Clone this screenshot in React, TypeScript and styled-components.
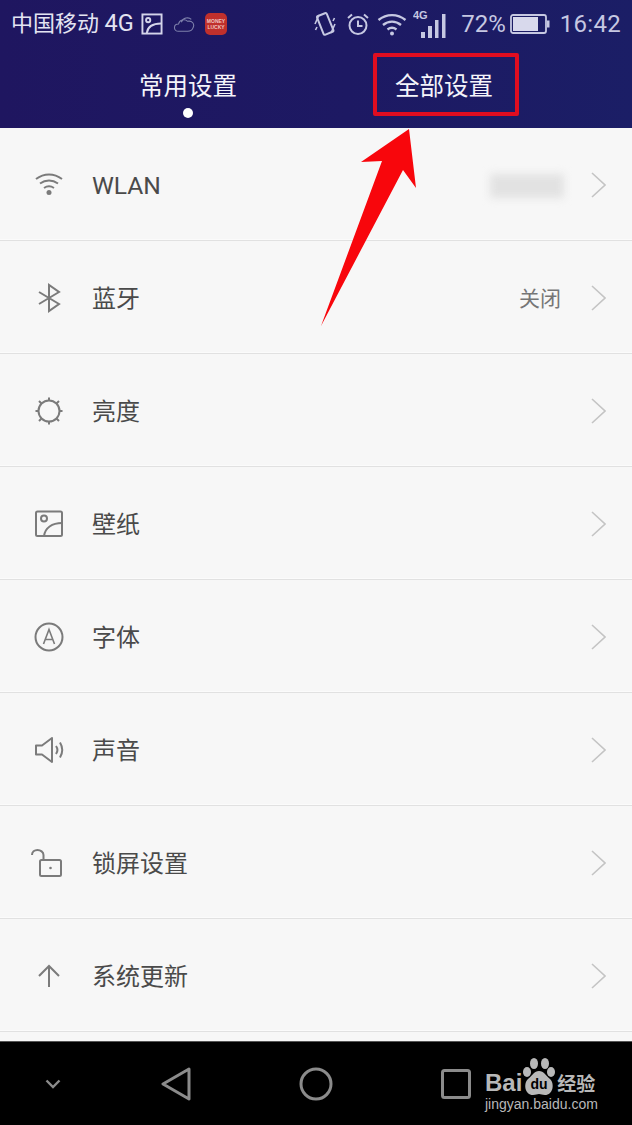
import React from 'react'
import styled, { createGlobalStyle } from 'styled-components'

const GlobalStyle = createGlobalStyle`
html, body {
  margin: 0;
  padding: 0;
  background: #000;
}
`

const fontStack = `Roboto, "Noto Sans CJK SC", "Noto Sans", sans-serif`

const Screen = styled.div`
position: relative;
width: 632px;
height: 1125px;
overflow: hidden;
display: flex;
flex-direction: column;
font-family: ${fontStack};
background: #f7f7f7;
`

const Header = styled.header`
height: 128px;
flex: none;
display: flex;
flex-direction: column;
background: linear-gradient(90deg, #1f1660 0%, #1d1963 55%, #1b1e66 100%);
`

const StatusBar = styled.div`
height: 47px;
flex: none;
display: flex;
align-items: center;
justify-content: space-between;
padding: 0 11px 0 12px;
color: #c6c8e2;
`

const StatusGroup = styled.div`
display: flex;
align-items: center;
`

const Carrier = styled.span`
font-size: 22px;
line-height: 30px;
color: #e4e4f2;
margin: 0 7px 0 -1px;
white-space: nowrap;
`

const CarrierNet = styled.span`
font-size: 23.5px;
`

const Clock = styled.span`
font-size: 24px;
margin-left: 10px;
letter-spacing: 0.3px;
`

const Percent = styled.span`
font-size: 24px;
margin: 0 4px 0 12px;
`

const Tabs = styled.nav`
flex: 1;
display: grid;
grid-template-columns: 376px 1fr;
`

const FirstTab = styled.div`
display: flex;
flex-direction: column;
align-items: center;
width: 100px;
margin-left: 138px;
padding-top: 20px;
`

const TabLabel = styled.span`
font-size: 24.5px;
line-height: 40px;
color: #f4f4fa;
white-space: nowrap;
`

const Dot = styled.span`
width: 10px;
height: 10px;
margin-top: 1px;
border-radius: 50%;
background: #fff;
`

const Highlight = styled.div`
box-sizing: border-box;
width: 146px;
height: 63px;
margin: 6px 0 0 -3px;
padding: 4px 4px 0 0;
border: 4px solid #e00d20;
border-radius: 2px;
display: flex;
align-items: center;
justify-content: center;
`

const List = styled.ul`
flex: 1;
margin: 0;
padding: 0;
list-style: none;
`

const Row = styled.li`
box-sizing: border-box;
height: 113px;
display: flex;
align-items: center;
padding: 0 26px 0 31px;
border-bottom: 1px solid #e1e1e1;
box-shadow: inset 0 -1px 0 #fbfbfb;
`

const IconSlot = styled.span`
width: 36px;
height: 36px;
flex: none;
display: flex;
margin: 2px 25px 0 0;
color: #7b7b7b;
`

const Label = styled.span<{ $latin?: boolean }>`
flex: 1;
font-size: ${p => (p.$latin ? '24.6px' : '24px')};
color: #4a4a4a;
padding: ${p => (p.$latin ? '2px 0 0' : '0 0 2px')};
`

const Value = styled.span`
font-size: 21px;
color: #767676;
margin-right: 30px;
`

const BlurredValue = styled.span`
width: 74px;
height: 24px;
margin: 4px 27px 0 0;
background: #e2e2e2;
filter: blur(4px);
`

const ChevronIcon = styled.svg`
flex: none;
margin-top: 2px;
`

const NavBar = styled.footer`
height: 84px;
flex: none;
display: grid;
grid-template-columns: 106px 140px 140px 140px;
align-items: center;
justify-items: center;
background: #000;
border-top: 1px solid #555;
box-sizing: border-box;
color: #8b8b8b;
`

const Watermark = styled.div`
position: absolute;
left: 485px;
top: 1057px;
width: 114px;
color: #b8b8b8;
`

const LogoLine = styled.div`
display: flex;
align-items: flex-end;
height: 39px;
white-space: nowrap;
`

const LogoLatin = styled.span`
font-family: "Liberation Sans", sans-serif;
font-size: 24px;
font-weight: 700;
line-height: 26px;
`

const LogoCjk = styled.span`
font-family: "Noto Sans CJK SC", sans-serif;
font-size: 19px;
font-weight: 700;
line-height: 26px;
`

const Domain = styled.div`
font-family: "Liberation Sans", sans-serif;
font-size: 14px;
line-height: 16px;
white-space: nowrap;
`

const Arrow = styled.svg`
position: absolute;
left: 316px;
top: 125px;
`

const Line = { fill: 'none', stroke: 'currentColor', strokeWidth: 2 } as const

const WifiIcon = () => (
  <svg width="36" height="36" viewBox="0 0 36 36" {...Line}>
    <path d="M5 12c8-6 18-6 26 0" />
    <path d="M9 16.500c5.500-4 12.500-4 18 0" />
    <path d="M13 21c3-2 7-2 10 0" />
    <circle cx="18" cy="25.500" r="2.500" fill="currentColor" stroke="none" />
  </svg>
)

const BluetoothIcon = () => (
  <svg width="36" height="36" viewBox="0 0 36 36" {...Line}>
    <path d="M8 24l20-12-10-7v26l10-7L8 12" />
  </svg>
)

const SunIcon = () => (
  <svg width="36" height="36" viewBox="0 0 36 36" {...Line}>
    <circle cx="18" cy="18" r="10.500" />
    <path d="M18 4.500v3M18 28.500v3M4.500 18h3M28.500 18h3M8 8l2.500 2.500M25.500 25.500L28 28M28 8l-2.500 2.500M10.500 25.500L8 28" />
  </svg>
)

const PictureIcon = () => (
  <svg width="36" height="36" viewBox="0 0 36 36" {...Line}>
    <rect x="5" y="5.500" width="26" height="24.500" rx="1.500" />
    <circle cx="13" cy="12.500" r="3" />
    <path d="M13 30c1-8 8-13 18-13" />
  </svg>
)

const FontIcon = () => (
  <svg width="36" height="36" viewBox="0 0 36 36" {...Line}>
    <circle cx="18" cy="18" r="13.500" />
    <path d="M12.500 25L18 10.500 23.500 25M14.300 20.500h7.400" strokeWidth="1.600" />
  </svg>
)

const SoundIcon = () => (
  <svg width="36" height="36" viewBox="0 0 36 36" {...Line}>
    <path d="M5 13.500v9h6l10 7.500V6l-10 7.500z" strokeLinejoin="round" />
    <path d="M25 14c1.800 2.500 1.800 5.500 0 8M29 10.500c3 5 3 10 0 15" />
  </svg>
)

const UnlockIcon = () => (
  <svg width="36" height="36" viewBox="-2 0 36 36" {...Line}>
    <rect x="7" y="15" width="21" height="16" rx="1.500" />
    <circle cx="17.500" cy="23" r="1.300" fill="currentColor" stroke="none" />
    <path d="M-1 10c0-3 2.500-5 5.500-5s6 2 6 5v5" />
  </svg>
)

const UpIcon = () => (
  <svg width="36" height="36" viewBox="0 0 36 36" {...Line}>
    <path d="M18 29V8M8 18L18 8l10 10" />
  </svg>
)

const Chevron = () => (
  <ChevronIcon width="15" height="26" viewBox="0 0 15 26" fill="none" stroke="#c4c4c4" strokeWidth="1.600">
    <path d="M1 1l13 12L1 25" />
  </ChevronIcon>
)

const ImageBadge = () => (
  <svg width="22" height="22" viewBox="0 0 23 23" fill="none" stroke="#d4d4ea" strokeWidth="2">
    <rect x="1.500" y="1.500" width="20" height="20" />
    <circle cx="7.500" cy="7.500" r="2.200" />
    <path d="M6 21c1-7 7-10 15-10" />
  </svg>
)

const CloudIcon = () => (
  <svg width="22" height="20" viewBox="0 0 24 22" fill="none" stroke="#7e80ab" strokeWidth="1.200" style={{ marginLeft: 10 }}>
    <path d="M6 19c-6 0-6-8 0-8 1-5 7-6 10-3 5-1 8 3 6 7-1 3-3 4-6 4z" />
    <path d="M9 9c2-5 8-6 11-3" />
  </svg>
)

const AppBadge = () => (
  <svg width="22" height="22" viewBox="0 0 22 22" style={{ marginLeft: 10 }}>
    <rect width="22" height="22" rx="5" fill="#c0302c" />
    <g fill="#eec4c0" fontFamily="Liberation Sans, sans-serif" fontSize="5" fontWeight="700" textAnchor="middle">
      <text x="11" y="10">MONEY</text>
      <text x="11" y="15.500">LUCKY</text>
    </g>
  </svg>
)

const VibrateIcon = () => (
  <svg width="22" height="26" viewBox="0 0 22 26" fill="none" stroke="#c6c8e2" strokeWidth="2">
    <rect x="6" y="3" width="10.500" height="20" rx="1.500" transform="rotate(-22 11 13)" />
    <path d="M1 13l4-9M1.500 19l1.500-3M21 13l-4 9M20.500 7L19 10" strokeWidth="1.600" />
  </svg>
)

const AlarmIcon = () => (
  <svg width="24" height="24" viewBox="0 0 24 24" fill="none" stroke="#c6c8e2" strokeWidth="2" style={{ marginLeft: 10 }}>
    <circle cx="12" cy="13.500" r="8.500" />
    <path d="M12 8.500v5.500h4.500M2 6l4-3.500M22 6l-4-3.500" />
  </svg>
)

const StatusWifi = () => (
  <svg width="30" height="24" viewBox="0 0 30 24" fill="none" stroke="#c6c8e2" strokeWidth="2.400" style={{ marginLeft: 7 }}>
    <path d="M1.500 8c8-6.500 19-6.500 27 0" />
    <path d="M6 13c5.500-4.500 12.500-4.500 18 0" />
    <path d="M10.500 17.500c3-2.200 6-2.200 9 0" />
    <circle cx="15" cy="21.500" r="2" fill="#c6c8e2" stroke="none" />
  </svg>
)

const SignalIcon = () => (
  <svg width="36" height="32" viewBox="0 0 36 32" fill="#c6c8e2" style={{ marginLeft: 6 }}>
    <text x="0" y="11" fontFamily="Liberation Sans, sans-serif" fontSize="11" fontWeight="700">4G</text>
    <rect x="8" y="24" width="4" height="6" />
    <rect x="15" y="18" width="4" height="12" />
    <rect x="22" y="12" width="3.500" height="18" />
    <rect x="29" y="6" width="3.500" height="24" />
  </svg>
)

const BatteryIcon = () => (
  <svg width="40" height="20" viewBox="0 0 40 20" fill="none">
    <rect x="1" y="1" width="35" height="18" rx="2" stroke="#c6c8e2" strokeWidth="1.800" />
    <rect x="3" y="3" width="25" height="14" fill="#d8d9ec" />
    <rect x="37" y="6.500" width="2.500" height="7" fill="#c6c8e2" />
  </svg>
)

const Paw = () => (
  <svg width="34" height="38" viewBox="0 0 34 38" style={{ flex: 'none', margin: '0 1px 0 0' }}>
    <g fill="#b8b8b8">
      <ellipse cx="12" cy="5.500" rx="4" ry="5.500" />
      <ellipse cx="23" cy="5.500" rx="4" ry="5.500" />
      <ellipse cx="5" cy="14" rx="4" ry="5" />
      <ellipse cx="29" cy="14" rx="4" ry="5" />
      <path d="M17 13c5 0 6 4 11 8 5 5 3 16-5 16-3 0-4-1-6-1s-3 1-6 1c-8 0-10-11-5-16 5-4 6-8 11-8z" />
    </g>
    <text x="17" y="31" textAnchor="middle" fontFamily="Liberation Sans, sans-serif" fontSize="14" fontWeight="700" fill="#000">du</text>
  </svg>
)

const rows = [
  { label: 'WLAN', icon: <WifiIcon />, blurred: true, latin: true },
  { label: '蓝牙', icon: <BluetoothIcon />, value: '关闭' },
  { label: '亮度', icon: <SunIcon /> },
  { label: '壁纸', icon: <PictureIcon /> },
  { label: '字体', icon: <FontIcon /> },
  { label: '声音', icon: <SoundIcon /> },
  { label: '锁屏设置', icon: <UnlockIcon /> },
  { label: '系统更新', icon: <UpIcon /> },
]

export default function App(): React.JSX.Element {
  return (
    <Screen>
      <GlobalStyle />
      <Header>
        <StatusBar>
          <StatusGroup>
            <Carrier>中国移动 <CarrierNet>4G</CarrierNet></Carrier>
            <ImageBadge />
            <CloudIcon />
            <AppBadge />
          </StatusGroup>
          <StatusGroup>
            <VibrateIcon />
            <AlarmIcon />
            <StatusWifi />
            <SignalIcon />
            <Percent>72%</Percent>
            <BatteryIcon />
            <Clock>16:42</Clock>
          </StatusGroup>
        </StatusBar>
        <Tabs>
          <FirstTab>
            <TabLabel>常用设置</TabLabel>
            <Dot />
          </FirstTab>
          <Highlight>
            <TabLabel>全部设置</TabLabel>
          </Highlight>
        </Tabs>
      </Header>
      <List>
        {rows.map(row => (
          <Row key={row.label}>
            <IconSlot>{row.icon}</IconSlot>
            <Label $latin={row.latin}>{row.label}</Label>
            {row.blurred && <BlurredValue />}
            {row.value && <Value>{row.value}</Value>}
            <Chevron />
          </Row>
        ))}
      </List>
      <NavBar>
        <svg width="16" height="10" viewBox="0 0 16 10" fill="none" stroke="currentColor" strokeWidth="2.400">
          <path d="M1.500 1.500L8 8l6.500-6.500" />
        </svg>
        <svg width="30" height="34" viewBox="0 0 30 34" fill="none" stroke="currentColor" strokeWidth="3" strokeLinejoin="round">
          <path d="M28 2L2 17l26 15z" />
        </svg>
        <svg width="34" height="34" viewBox="0 0 34 34" fill="none" stroke="currentColor" strokeWidth="3">
          <circle cx="17" cy="17" r="15" />
        </svg>
        <svg width="30" height="30" viewBox="0 0 30 30" fill="none" stroke="currentColor" strokeWidth="3">
          <rect x="1.500" y="1.500" width="27" height="27" rx="2" />
        </svg>
      </NavBar>
      <Watermark>
        <LogoLine>
          <LogoLatin>Bai</LogoLatin>
          <Paw />
          <LogoCjk>经验</LogoCjk>
        </LogoLine>
        <Domain>jingyan.baidu.com</Domain>
      </Watermark>
      <Arrow width="104" height="205" viewBox="316 125 104 205">
        <path d="M409 129L361 162l21-1-61 165 82-156 13 18z" fill="#f8060c" />
      </Arrow>
    </Screen>
  )
}
